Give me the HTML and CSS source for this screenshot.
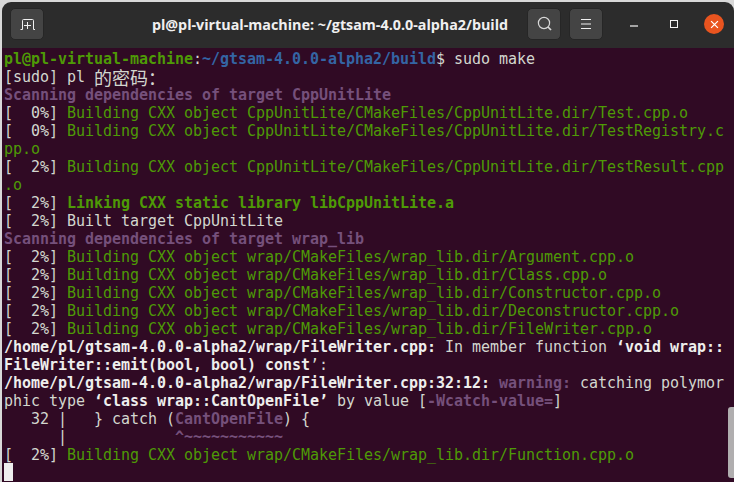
FILE: index.html
```html
<!DOCTYPE html>
<html lang="en">
<head>
<meta charset="utf-8">
<title>Terminal</title>
<link rel="stylesheet" href="styles.css">
</head>
<body>
<div class="window">
  <header class="titlebar">
    <button class="btn" aria-label="New tab">
      <svg width="16" height="16" viewBox="0 0 16 16"><path d="M1.5 13.5H3.5V4.5Q3.5 3.5 4.5 3.5H13.5Q14.5 3.5 14.5 4.5V13.5H16M8.5 6V13M5 9.5H12" fill="none" stroke="#f0f0f0" stroke-width="1"/></svg>
    </button>
    <div class="title">pl@pl-virtual-machine: ~/gtsam-4.0.0-alpha2/build</div>
    <button class="btn" aria-label="Search">
      <svg width="16" height="16" viewBox="0 0 16 16"><circle cx="8" cy="7" r="5.6" fill="none" stroke="#d8d8d8" stroke-width="1.2"/><path d="M12 11L15 14" stroke="#d8d8d8" stroke-width="1.7"/></svg>
    </button>
    <button class="btn" aria-label="Menu">
      <svg width="12" height="12" viewBox="0 0 12 12"><path d="M1 1.5H11M1 6H11M1 10.5H11" stroke="#f0f0f0" stroke-width="1"/></svg>
    </button>
    <div class="controls">
      <svg class="ctl" width="10" height="10" viewBox="0 0 10 10"><path d="M1 7H9" stroke="#f5f5f5" stroke-width="1.2"/></svg>
      <svg class="ctl" width="10" height="10" viewBox="0 0 10 10"><rect x="1.5" y="1.5" width="7" height="7" fill="none" stroke="#f5f5f5" stroke-width="1"/></svg>
      <span class="close"><svg width="9" height="9" viewBox="0 0 10 10"><path d="M1.2 1.2L8.8 8.8M8.8 1.2L1.2 8.8" stroke="#fff" stroke-width="1.4"/></svg></span>
    </div>
  </header>
  <main class="terminal">
<pre class="output"><b class="g">pl@pl-virtual-machine</b>:<b class="u">~/gtsam-4.0.0-alpha2/build</b>$ sudo make
[sudo] pl <span class="cjk">的密码：</span>
<b class="p">Scanning dependencies of target CppUnitLite</b>
[  0%] <span class="g">Building CXX object CppUnitLite/CMakeFiles/CppUnitLite.dir/Test.cpp.o</span>
[  0%] <span class="g">Building CXX object CppUnitLite/CMakeFiles/CppUnitLite.dir/TestRegistry.c</span>
<span class="g">pp.o</span>
[  2%] <span class="g">Building CXX object CppUnitLite/CMakeFiles/CppUnitLite.dir/TestResult.cpp</span>
<span class="g">.o</span>
[  2%] <b class="g">Linking CXX static library libCppUnitLite.a</b>
[  2%] Built target CppUnitLite
<b class="p">Scanning dependencies of target wrap_lib</b>
[  2%] <span class="g">Building CXX object wrap/CMakeFiles/wrap_lib.dir/Argument.cpp.o</span>
[  2%] <span class="g">Building CXX object wrap/CMakeFiles/wrap_lib.dir/Class.cpp.o</span>
[  2%] <span class="g">Building CXX object wrap/CMakeFiles/wrap_lib.dir/Constructor.cpp.o</span>
[  2%] <span class="g">Building CXX object wrap/CMakeFiles/wrap_lib.dir/Deconstructor.cpp.o</span>
[  2%] <span class="g">Building CXX object wrap/CMakeFiles/wrap_lib.dir/FileWriter.cpp.o</span>
<b class="w">/home/pl/gtsam-4.0.0-alpha2/wrap/FileWriter.cpp:</b> In member function <b class="w">‘void wrap::</b>
<b class="w">FileWriter::emit(bool, bool) const</b>’:
<b class="w">/home/pl/gtsam-4.0.0-alpha2/wrap/FileWriter.cpp:32:12:</b> <b class="p">warning:</b> catching polymor
phic type <b class="w">‘class wrap::CantOpenFile’</b> by value [<b class="p">-Wcatch-value=</b>]
   32 |   } catch (<b class="p">CantOpenFile</b>) {
      |            <b class="p">^~~~~~~~~~~~</b>
[  2%] <span class="g">Building CXX object wrap/CMakeFiles/wrap_lib.dir/Function.cpp.o</span>
<span class="cursor"> </span></pre>
    <div class="scrollbar"></div>
  </main>
</div>
</body>
</html>
```
FILE: styles.css
```css
* { box-sizing: border-box; }
html, body { margin: 0; height: 100%; }
body { background: #d9d9d9; overflow: hidden; }
.window {
  height: 482px;
  margin-left: 2px;
  padding-top: 2px;
  display: flex;
  flex-direction: column;
}
.titlebar {
  height: 46px;
  flex: none;
  background: #2c2c2c;
  border-radius: 9px 9px 0 0;
  display: flex;
  align-items: center;
  padding: 6px 0 8px 8px;
  gap: 8px;
}
.btn {
  flex: none;
  width: 34px;
  height: 32px;
  padding: 0;
  border: 1px solid #262626;
  border-radius: 5px;
  background: #444;
  display: flex;
  align-items: center;
  justify-content: center;
}
.title {
  flex: 1;
  padding-left: 89px;
  text-align: center;
  white-space: nowrap;
  color: #f0f0f0;
  font: 700 14.3px "Open Sans", "Noto Sans", sans-serif;
}
.controls {
  flex: none;
  width: 123px;
  display: flex;
  align-items: center;
  padding-left: 18px;
  gap: 30px;
}
.ctl { flex: none; }
.close {
  flex: none;
  width: 20px;
  height: 20px;
  border-radius: 50%;
  background: #e9541f;
  display: flex;
  align-items: center;
  justify-content: center;
  margin-left: -5px;
}
.terminal {
  flex: 1;
  min-height: 0;
  position: relative;
  background: #300a24;
  padding: 2px 0 0 2px;
  overflow: hidden;
}
.output {
  margin: 0;
  font: 400 15px/18px "DejaVu Sans Mono", "Noto Sans CJK SC", monospace;
  letter-spacing: -0.03px;
  color: #d3d7cf;
}
.output b { font-weight: 700; }
.cjk { font: 400 18px/18px "Noto Sans CJK SC", sans-serif; letter-spacing: 0; vertical-align: top; }
.g { color: #4e9a06; }
.u { color: #3465a4; }
.p { color: #75507b; }
.w { color: #eeeeec; }
.cursor { display: inline-block; width: 9px; height: 18px; margin-top: -1px; background: #eee; vertical-align: top; }
.scrollbar {
  position: absolute;
  right: 0;
  top: 359px;
  width: 6px;
  height: 71px;
  background: #b0aeaf;
  border-radius: 3px 0 0 3px;
}
```
